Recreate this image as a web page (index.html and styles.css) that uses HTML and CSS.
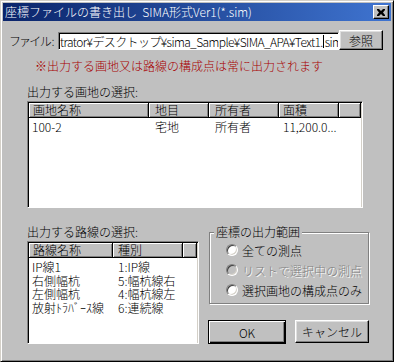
FILE: index.html
```html
<!DOCTYPE html>
<html lang="ja">
<head>
    <meta charset="UTF-8">
    <title>座標ファイルの書き出し</title>
    <link rel="stylesheet" href="styles.css">
</head>
<body>
    <div class="window">
        <div class="titlebar">
            <span class="title">座標ファイルの書き出し&nbsp; SIMA形式Ver1(*.sim)</span>
            <span class="close">
                <svg width="8" height="7" viewBox="0 0 8 7">
                    <path d="M0 0h2l2 2 2-2h2v1l-2 2.5 2 2.5v1h-2l-2-2-2 2h-2v-1l2-2.5-2-2.5z" fill="#000"/>
                </svg>
            </span>
        </div>

        <div class="file-row">
            <span class="file-label">ファイル:</span>
            <div class="file-input"><span>trator¥デスクトップ¥sima_Sample¥SIMA_APA¥Text1.</span><span class="caret"></span><span>sim</span></div>
            <button class="btn browse">参照</button>
        </div>

        <p class="notice">※出力する画地又は路線の構成点は常に出力されます</p>

        <p class="caption">出力する画地の選択:</p>
        <div class="listview lots">
            <div class="lv-head">
                <span class="hcell c-name">画地名称</span>
                <span class="hcell c-cat">地目</span>
                <span class="hcell c-owner">所有者</span>
                <span class="hcell c-area">面積</span>
                <span class="hcell c-rest"></span>
            </div>
            <div class="lv-body">
                <div class="lv-row">
                    <span class="cell c-name">100-2</span>
                    <span class="cell c-cat">宅地</span>
                    <span class="cell c-owner">所有者</span>
                    <span class="cell c-area">11,200.0...</span>
                </div>
            </div>
        </div>

        <div class="bottom">
            <div class="routes-col">
                <p class="caption">出力する路線の選択:</p>
                <div class="listview routes">
                    <div class="lv-head">
                        <span class="hcell r-name">路線名称</span>
                        <span class="hcell r-type">種別</span>
                        <span class="hcell c-rest"></span>
                    </div>
                    <div class="lv-body">
                        <div class="lv-row"><span class="cell r-name">IP線1</span><span class="cell r-type">1:IP線</span></div>
                        <div class="lv-row"><span class="cell r-name">右側幅杭</span><span class="cell r-type">5:幅杭線右</span></div>
                        <div class="lv-row"><span class="cell r-name">左側幅杭</span><span class="cell r-type">4:幅杭線左</span></div>
                        <div class="lv-row"><span class="cell r-name">放射ﾄﾗﾊﾞｰｽ線</span><span class="cell r-type">6:連続線</span></div>
                    </div>
                </div>
            </div>

            <div class="side-col">
                <fieldset class="range">
                    <legend>座標の出力範囲</legend>
                    <label class="radio"><span class="dot"></span>全ての測点</label>
                    <label class="radio disabled"><span class="dot"></span>リストで選択中の測点</label>
                    <label class="radio"><span class="dot"></span>選択画地の構成点のみ</label>
                </fieldset>
                <div class="actions">
                    <button class="btn ok">OK</button>
                    <button class="btn cancel">キャンセル</button>
                </div>
            </div>
        </div>
    </div>
</body>
</html>
```

FILE: styles.css
```css
body {
    margin: 0;
    background-color: #c0c0c0;
    font-family: "Noto Sans CJK JP", sans-serif;
    font-size: 12px;
    font-weight: 300;
    color: #000;
}
p {
    margin: 0;
}
.window {
    width: 394px;
    height: 362px;
    box-sizing: border-box;
    padding: 2px;
    border: 1px solid;
    border-color: #d4d0c8 #000 #000 #d4d0c8;
    box-shadow: inset 1px 1px #fff, inset -1px -1px #808080;
    background-color: #c0c0c0;
}
.titlebar {
    height: 18px;
    display: flex;
    align-items: center;
    justify-content: space-between;
    padding-left: 2px;
    padding-right: 2px;
    background: linear-gradient(to right, #0a246a, #3f74d0);
}
.title {
    color: #fff;
    line-height: 18px;
    white-space: nowrap;
}
.close {
    width: 16px;
    height: 14px;
    box-sizing: border-box;
    display: flex;
    align-items: center;
    justify-content: center;
    background-color: #c0c0c0;
    border: 1px solid;
    border-color: #fff #000 #000 #fff;
    box-shadow: inset -1px -1px #808080;
}

.btn {
    box-sizing: border-box;
    margin: 0;
    padding: 0;
    font-family: inherit;
    font-size: 12px;
    font-weight: 300;
    color: #000;
    background-color: #c0c0c0;
    border: 1px solid;
    border-color: #fff #000 #000 #fff;
    box-shadow: inset -1px -1px #808080, inset 1px 1px #dfdfdf;
}

.file-row {
    display: flex;
    align-items: flex-end;
    margin-top: 9px;
    padding-left: 7px;
    height: 20px;
}
.file-label {
    width: 48px;
    flex-shrink: 0;
    line-height: 12px;
    margin-bottom: 3px;
    white-space: nowrap;
    font-feature-settings: "palt";
}
.file-input {
    width: 281px;
    height: 18px;
    flex-shrink: 0;
    box-sizing: border-box;
    padding: 1px 0 0 1px;
    display: flex;
    align-items: center;
    overflow: hidden;
    white-space: nowrap;
    letter-spacing: -0.6px;
    background-color: #fff;
    border: 1px solid;
    border-color: #808080 #fff #fff #808080;
    box-shadow: inset 1px 1px #000;
    line-height: 14px;
}
.caret {
    width: 1px;
    height: 13px;
    margin-right: 1px;
    background-color: #000;
    flex-shrink: 0;
}
.browse {
    width: 44px;
    height: 20px;
    flex-shrink: 0;
}

.notice {
    margin-top: 10px;
    padding-left: 32px;
    line-height: 12px;
    color: #a80000;
}
.caption {
    line-height: 12px;
    white-space: nowrap;
}
.window > .caption {
    margin-top: 14px;
    padding-left: 24px;
}

.listview {
    box-sizing: border-box;
    padding: 1px;
    border: 1px solid;
    border-color: #808080 #fff #fff #808080;
    box-shadow: inset 1px 1px #000, inset -1px -1px #d4d0c8;
    overflow: hidden;
}
.lots {
    margin-top: 3px;
    margin-left: 24px;
    width: 336px;
    height: 107px;
}
.lv-head {
    display: flex;
    height: 15px;
}
.hcell {
    box-sizing: border-box;
    height: 15px;
    padding-left: 4px;
    line-height: 14px;
    white-space: nowrap;
    background-color: #c0c0c0;
    border-right: 1px solid #000;
    border-bottom: 1px solid #000;
    box-shadow: inset 1px 1px #fff, inset -1px -1px #808080;
}
.lv-body {
    background-color: #fff;
    height: 100%;
    padding-top: 2px;
}
.lv-row {
    display: flex;
    line-height: 13.5px;
    white-space: nowrap;
}
.cell {
    box-sizing: border-box;
    padding-left: 3px;
}
.c-name { width: 120px; }
.c-cat { width: 60px; padding-left: 6px; }
.c-owner { width: 70px; padding-left: 6px; }
.c-area { width: 60px; padding-left: 4px; }
.c-rest { flex: 1; }
.r-name { width: 84px; }
.r-type { width: 70px; padding-left: 5px; }

.bottom {
    display: flex;
    margin-left: 24px;
}
.routes-col {
    width: 172px;
}
.routes-col .caption {
    margin-top: 18px;
}
.routes {
    margin-top: 3px;
    height: 103px;
}

.side-col {
    margin-left: 9px;
    width: 161px;
}
.range {
    margin: 18px 0 0 1px;
    width: 160px;
    box-sizing: border-box;
    padding: 2px 4px 3px 4px;
    border: 1px solid #808080;
    box-shadow: inset 1px 1px #fff, 1px 1px #fff;
    min-inline-size: 0;
}
.range legend {
    padding: 0 2px;
    line-height: 12px;
    background-color: #c0c0c0;
}
.radio {
    display: flex;
    align-items: center;
    height: 20px;
    padding-left: 12px;
    white-space: nowrap;
}
.dot {
    width: 12px;
    height: 12px;
    box-sizing: border-box;
    margin-right: 4px;
    border-radius: 50%;
    border: 1px solid;
    border-color: #808080 #fff #fff #808080;
    box-shadow: inset 1px 1px #404040, inset -1px -1px #d4d0c8;
    background-color: #fff;
}
.radio.disabled {
    color: #808080;
    text-shadow: 1px 1px #fff;
}
.radio.disabled .dot {
    background-color: #c0c0c0;
}
.actions {
    display: flex;
    justify-content: space-between;
    margin-top: 16px;
}
.ok {
    width: 78px;
    height: 24px;
    border-color: #000;
    box-shadow: inset 1px 1px #fff, inset -1px -1px #000, inset -2px -2px #808080;
}
.cancel {
    width: 74px;
    height: 23px;
}
```
